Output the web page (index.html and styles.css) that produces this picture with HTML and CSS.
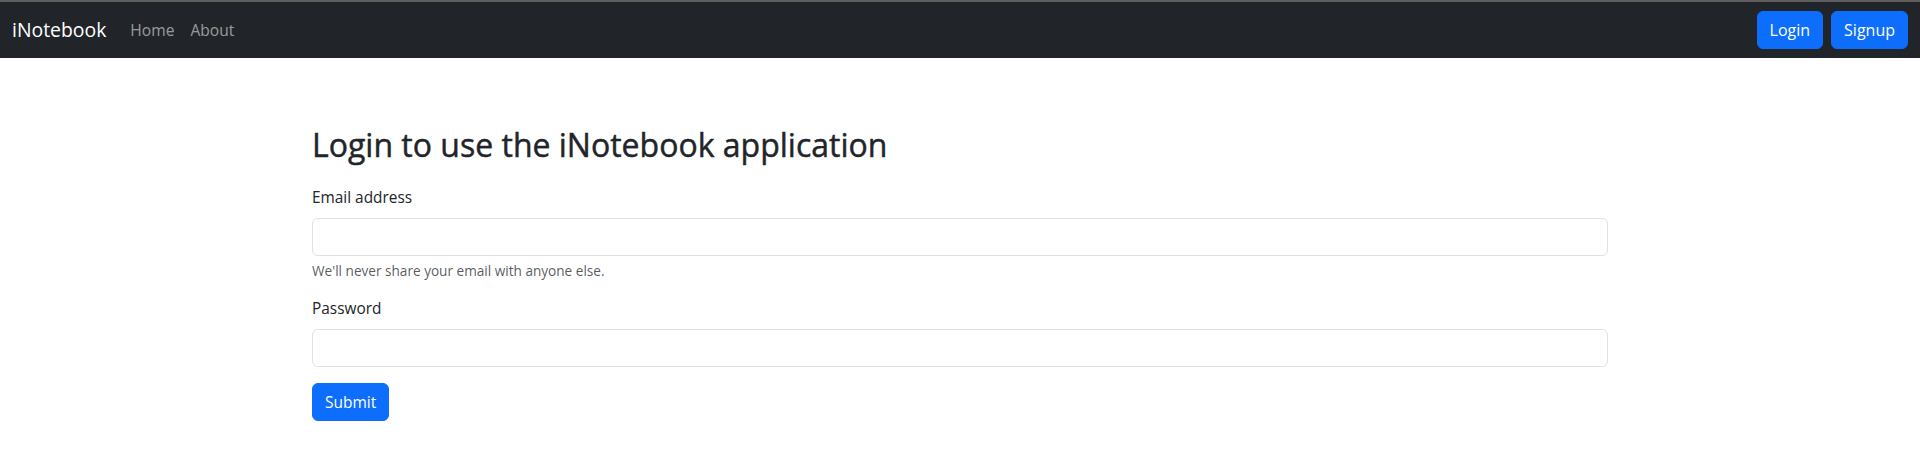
FILE: index.html
```html
<!DOCTYPE html>
<html lang="en">
<head>
<meta charset="utf-8">
<title>iNotebook</title>
<link rel="stylesheet" href="styles.css">
</head>
<body>
<div class="topline"></div>
<nav class="navbar">
  <div class="nav-inner">
    <a class="brand" href="#">iNotebook</a>
    <ul class="nav-links">
      <li><a class="nav-link" href="#">Home</a></li>
      <li><a class="nav-link" href="#">About</a></li>
    </ul>
    <div class="nav-actions">
      <a class="btn btn-primary" href="#">Login</a>
      <a class="btn btn-primary" href="#">Signup</a>
    </div>
  </div>
</nav>
<main class="container">
  <h2 class="title">Login to use the iNotebook application</h2>
  <form class="login-form">
    <div class="field">
      <label class="form-label" for="email">Email address</label>
      <input class="form-control" type="email" id="email">
      <div class="form-text">We'll never share your email with anyone else.</div>
    </div>
    <div class="field">
      <label class="form-label" for="password">Password</label>
      <input class="form-control" type="password" id="password">
    </div>
    <button class="btn btn-primary btn-submit" type="submit">Submit</button>
  </form>
</main>
</body>
</html>
```
FILE: styles.css
```css
* { box-sizing: border-box; }
html, body { margin: 0; padding: 0; }
body {
  font-family: "Segoe UI", "Open Sans", "Noto Sans", sans-serif;
  font-size: 16px;
  line-height: 1.5;
  color: #212529;
  background: #fff;
}
.topline { height: 2px; background: #5e5e5e; }
.navbar { background: #212529; padding: 8px 0; }
.nav-inner {
  display: flex;
  align-items: center;
  padding: 0 12px;
}
.brand {
  color: #fff;
  text-decoration: none;
  font-size: 19.4px;
  line-height: 30px;
  padding: 5px 0;
  margin-right: 16px;
}
.nav-links {
  display: flex;
  list-style: none;
  margin: 0;
  padding: 0;
  flex: 1;
}
.nav-link {
  display: block;
  padding: 8px;
  font-size: 15.6px;
  line-height: 24px;
  color: rgba(255,255,255,.55);
  text-decoration: none;
}
.nav-actions { display: flex; gap: 8px; }
.btn {
  display: inline-block;
  font-family: inherit;
  font-size: 16px;
  line-height: 24px;
  padding: 6px 12px;
  border: 1px solid transparent;
  border-radius: 6px;
  text-decoration: none;
  cursor: pointer;
}
.btn-primary { background: #0d6efd; border-color: #0d6efd; color: #fff; }
.btn-submit { display: block; font-size: 15.5px; height: 38px; }
.container {
  width: 1320px;
  margin: 0 auto;
  padding: 0 12px;
}
.title {
  font-size: 32px;
  font-weight: 500;
  line-height: 1.2;
  margin: 68px 0 0;
  -webkit-text-stroke: 0.45px #212529;
}
.login-form { margin-top: 22px; }
.field { margin-bottom: 16px; }
.form-label {
  display: block;
  margin-bottom: 8px;
  font-size: 15.4px;
  line-height: 24px;
}
.form-control {
  display: block;
  width: 100%;
  height: 38px;
  padding: 6px 12px;
  font-family: inherit;
  font-size: 16px;
  border: 1px solid #dee2e6;
  border-radius: 6px;
  background: #fff;
}
.form-text {
  margin-top: 4px;
  font-size: 13.6px;
  line-height: 21px;
  color: rgba(33,37,41,.75);
}
```
